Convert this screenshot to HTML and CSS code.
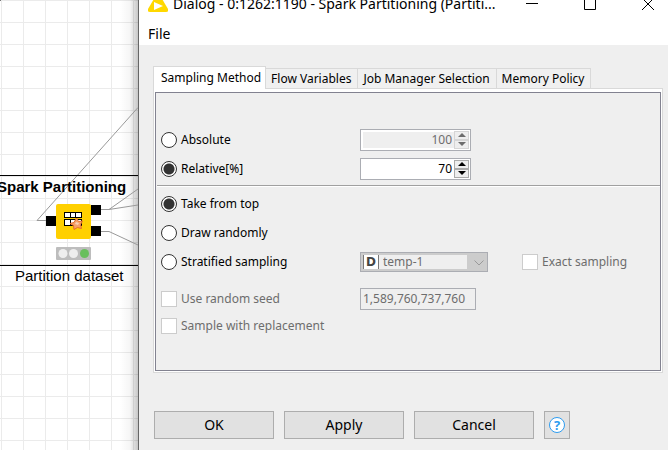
FILE: index.html
```html
<!DOCTYPE html>
<html lang="en">
<head>
<meta charset="utf-8">
<title>Dialog - Spark Partitioning</title>
<link rel="stylesheet" href="styles.css">
</head>
<body>
<div class="desktop">
  <section class="canvas" aria-label="Workflow">
    <svg class="wires" width="138" height="450" aria-hidden="true">
      <path d="M138 107.500L37 220.500H47M101 209.500H109L138 189M109 209.500L138 205M101 231.500H109L138 245" fill="none" stroke="#999"/>
      <path d="M0 0.500H1" stroke="#777"/>
      <path d="M0 175.500H138M0 265.500H138" stroke="#000"/>
    </svg>
    <div class="node-title">Spark Partitioning</div>
    <svg class="node" width="56" height="57" viewBox="0 0 56 57" aria-hidden="true">
      <rect x="0" y="12" width="11" height="10"/>
      <rect x="45" y="1" width="10" height="10"/>
      <rect x="45" y="22" width="10" height="10"/>
      <rect x="10" y="0" width="35" height="35" rx="2" fill="#ffd000"/>
      <path d="M18 8h18v6H18zM18 15h18v7H18z"/>
      <path d="M19 9h5v4h-5zM25 9h4v4h-4zM30 9h5v4h-5zM19 16h5v5h-5zM25 16h4v5h-4zM30 16h5v5h-5z" fill="#fff"/>
      <path d="M30.500 14l2 3.500 4-.5-2 3.500 1 4-4-1-3.500 2-.5-4-3.500-2 4-1z" fill="#f5a06a" stroke="#e8702a"/>
      <path d="M30 18l3 1-1 2-3-1z" fill="#fbd0b4"/>
      <rect x="10" y="43" width="35" height="13" rx="1" fill="#bdbdbd"/>
      <circle cx="17" cy="49.500" r="4.500" fill="#eee"/>
      <circle cx="27.500" cy="49.500" r="4.500" fill="#eee"/>
      <circle cx="38.500" cy="49.500" r="4.500" fill="#69bf5d"/>
    </svg>
    <div class="node-name">Partition dataset</div>
  </section>

  <main class="dialog">
    <header class="titlebar">
      <svg class="logo" width="20" height="22" viewBox="0 0 20 22" aria-hidden="true"><path d="M10 1L20 18q1 3-2 3H2q-3 0-2-3z" fill="#ffd800"/><path d="M6 11l9 4-9 4z" fill="#fff"/></svg>
      <h1>Dialog - 0:1262:1190 - Spark Partitioning (Partiti...</h1>
      <div class="window-buttons">
        <button type="button" aria-label="Minimize"><svg width="12" height="12"><path d="M0 5.500h12" stroke="#000"/></svg></button>
        <button type="button" aria-label="Maximize"><svg width="12" height="12"><path d="M.5.500h11v11H.5z" fill="none" stroke="#000"/></svg></button>
        <button type="button" aria-label="Close"><svg width="12" height="12"><path d="M0 0l12 12M12 0L0 12" stroke="#000"/></svg></button>
      </div>
    </header>
    <nav class="menubar"><button type="button">File</button></nav>

    <form class="content">
      <div class="tabs" role="tablist">
        <button type="button" role="tab" class="tab active" aria-selected="true">Sampling Method</button>
        <button type="button" role="tab" class="tab">Flow Variables</button>
        <button type="button" role="tab" class="tab">Job Manager Selection</button>
        <button type="button" role="tab" class="tab">Memory Policy</button>
      </div>
      <div class="panel">
        <div class="panel-body">
          <div class="row">
            <label class="choice"><input type="radio" name="size">Absolute</label>
            <div class="spinner disabled">
              <input type="text" value="100" aria-label="Absolute count" disabled>
              <span class="steps">
                <button type="button" aria-label="Increase count" disabled><svg width="8" height="4"><path d="M4 0l4 4H0z"/></svg></button>
                <button type="button" aria-label="Decrease count" disabled><svg width="8" height="4"><path d="M0 0h8L4 4z"/></svg></button>
              </span>
            </div>
          </div>
          <div class="row">
            <label class="choice"><input type="radio" name="size" checked>Relative[%]</label>
            <div class="spinner">
              <input type="text" value="70" aria-label="Relative percentage">
              <span class="steps">
                <button type="button" aria-label="Increase percentage"><svg width="8" height="4"><path d="M4 0l4 4H0z"/></svg></button>
                <button type="button" aria-label="Decrease percentage"><svg width="8" height="4"><path d="M0 0h8L4 4z"/></svg></button>
              </span>
            </div>
          </div>
          <hr>
          <div class="row"><label class="choice"><input type="radio" name="mode" checked>Take from top</label></div>
          <div class="row"><label class="choice"><input type="radio" name="mode">Draw randomly</label></div>
          <div class="row">
            <label class="choice"><input type="radio" name="mode">Stratified sampling</label>
            <div class="combo">
              <select aria-label="Stratification column" disabled><option>temp-1</option></select>
              <span class="type-icon">D</span>
              <svg class="chevron" width="10" height="6" aria-hidden="true"><path d="M.5.500L5 5 9.500.500" fill="none" stroke="#999"/></svg>
            </div>
            <label class="choice muted exact"><input type="checkbox" disabled>Exact sampling</label>
          </div>
          <div class="row seed">
            <label class="choice muted"><input type="checkbox" disabled>Use random seed</label>
            <input class="seed-value" type="text" value="1,589,760,737,760" aria-label="Random seed" disabled>
          </div>
          <div class="row last"><label class="choice muted"><input type="checkbox" disabled>Sample with replacement</label></div>
        </div>
      </div>
      <div class="actions">
        <button type="button">OK</button>
        <button type="button">Apply</button>
        <button type="button">Cancel</button>
        <button type="button" class="help" aria-label="Help"><span>?</span></button>
      </div>
    </form>
  </main>
</div>
</body>
</html>
```
FILE: styles.css
```css
* { box-sizing: border-box; }
body { margin: 0; font: 12px/16px "Noto Sans", sans-serif; color: #000; }
button, input, select { font: inherit; color: inherit; margin: 0; padding: 0; border-radius: 0; }
svg { display: block; }

.desktop { display: grid; grid-template-columns: 138px 1fr; min-height: 100vh; overflow: hidden; }

/* Workflow canvas */
.canvas {
  position: relative;
  overflow: hidden;
  font-family: "Liberation Sans", sans-serif;
  background:
    linear-gradient(to right, transparent 120px, rgba(0, 0, 0, .04) 130px, rgba(0, 0, 0, .22) 138px),
    linear-gradient(#ebebeb 1px, transparent 1px) 0 0 / 22px 22px,
    linear-gradient(to right, #ebebeb 1px, transparent 1px) 1px 0 / 22px 22px,
    #fff;
}
.wires { position: absolute; left: 0; top: 0; }
.node { position: absolute; left: 46px; top: 204px; }
.node-title { position: absolute; left: -3px; top: 179px; font-size: 15px; font-weight: bold; white-space: nowrap; }
.node-name { position: absolute; left: 15px; top: 268px; font-size: 15px; white-space: nowrap; }

/* Dialog window */
.dialog { border-left: 1px solid #666; background: #efefef; min-width: 0; }
.titlebar { display: flex; align-items: center; height: 32px; margin-top: -12px; padding: 0 14px 0 9px; background: #fff; }
.logo { margin-top: -4px; }
.titlebar h1 { flex: 1; margin: 0 0 0 5px; font: 14px/20px "Noto Sans", sans-serif; white-space: nowrap; }
.window-buttons { display: flex; gap: 46px; }
.window-buttons button { border: 0; background: none; }
.menubar { height: 25px; padding-left: 9px; background: #fff; font: 14px/20px "Noto Sans", sans-serif; }
.menubar button { display: block; padding-top: 4px; border: 0; background: none; }
.content { padding: 21px 5px 11px 14px; }

/* Tabs */
.tabs { display: flex; align-items: flex-end; }
.tab { height: 20px; padding: 0 6px 0 5px; border: 1px solid #d9d9d9; border-width: 1px 1px 0 0; background: #f0f0f0; white-space: nowrap; }
.tab.active { height: 23px; padding: 0 4px 1px 7px; border-left-width: 1px; background: #fff; margin-bottom: -1px; position: relative; }
.panel { padding: 3px 1px 1px; border: 1px solid #d9d9d9; background: #fff; }
.panel-body { padding: 32px 0 32px 5px; border: 1px solid #828290; background: #efefef; }

/* Form rows */
.row { display: flex; align-items: center; height: 29px; }
.choice { display: flex; align-items: center; gap: 4px; width: 199px; white-space: nowrap; }
.choice input { appearance: none; flex: none; width: 16px; height: 16px; background: #fff; }
.choice input[type="radio"] { border: 1px solid #333; border-radius: 50%; }
.choice input[type="radio"]:checked { background: radial-gradient(circle, #333 5px, #fff 6px); }
.choice input[type="checkbox"] { border: 1px solid #ccc; }
.muted { color: #6d6d6d; }
.exact { width: auto; margin-left: 34px; }
hr { height: 2px; margin: 2px 0 2px -4px; border: 0; border-top: 1px solid #a0a0a0; background: #fff; }
.seed { margin-top: 8px; }
.last { height: 25px; }

.spinner { display: flex; width: 111px; height: 22px; padding: 1px; border: 1px solid #abadb3; background: #fff; }
.spinner input { flex: 1; min-width: 0; padding-right: 2px; border: 0; background: #fff; text-align: right; }
.spinner.disabled input { margin: 1px 0 1px 1px; background: #efefef; color: #6d6d6d; }
.steps { display: grid; grid-template-rows: 1fr 1fr; width: 15px; }
.steps button { display: grid; place-items: center; border: 1px solid #aaa; background: #eee; }
.spinner.disabled .steps button { border-color: #d5d5d5; }
.spinner.disabled svg { fill: #6d6d6d; }

.combo { position: relative; width: 128px; height: 20px; }
.combo select { appearance: none; width: 100%; height: 100%; padding-left: 22px; border: 1px solid #abadb3; background: linear-gradient(#efefef, #efefef) 2px 2px / 104px 14px no-repeat #ccc; color: #6d6d6d; opacity: 1; }
.type-icon { position: absolute; left: 3px; top: 3px; width: 16px; height: 14px; border: 1px solid #777; border-width: 0 1px; background: #fff; color: #444; font: bold 12px/14px "DejaVu Sans", sans-serif; text-align: center; }
.chevron { position: absolute; right: 4px; top: 8px; }
.seed-value { width: 116px; height: 22px; padding: 0 2px; border: 1px solid #abadb3; background: #efefef; color: #6d6d6d; }

/* Actions */
.actions { display: flex; gap: 10px; margin: 38px 0 0 1px; font: 14px/20px "Noto Sans", sans-serif; }
.actions button { width: 120px; height: 28px; border: 1px solid #adadad; background: #e1e1e1; }
.actions .help { display: grid; place-items: center; width: 26px; }
.help span { width: 16px; height: 16px; border: 1px solid #2d9cf0; border-radius: 50%; background: #fff; color: #2d9cf0; font: bold 13px/14px "Open Sans", sans-serif; }
```
